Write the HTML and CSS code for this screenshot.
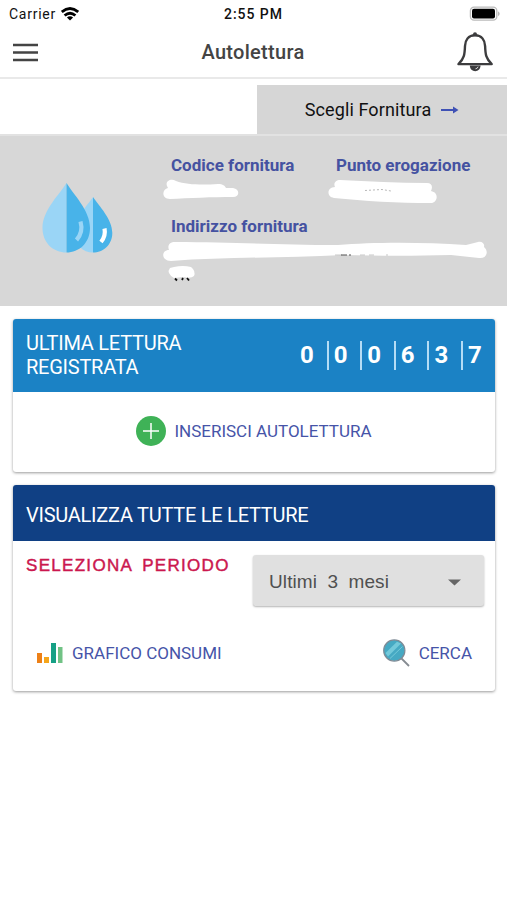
FILE: index.html
```html
<!DOCTYPE html>
<html lang="it">
<head>
    <meta charset="UTF-8">
    <meta name="viewport" content="width=device-width, initial-scale=1.0">
    <title>Autolettura</title>
    <link rel="stylesheet" href="styles.css">
</head>
<body>
    <div class="status-bar">
        <div class="carrier">
            <span>Carrier</span>
            <svg width="18" height="14" viewBox="0 0 18 14" fill="none" stroke="#000" stroke-width="2.8">
                <path d="M.8 4.9Q9-1.800 17.200 4.900"/>
                <path d="M3.600 8.500Q9 3.900 14.400 8.500"/>
                <path d="M9 13.6L5.9 10.6Q9 8.1 12.1 10.6Z" fill="#000" stroke="none"/>
            </svg>
        </div>
        <div class="time">2:55 PM</div>
        <div class="battery">
            <svg width="32" height="16" viewBox="0 0 32 16">
                <rect x="1.4" y="1.2" width="26.4" height="13" rx="3.6" fill="#fff" stroke="#bbb" stroke-width="1.3"/>
                <rect x="3" y="2.8" width="23" height="9.8" rx="2" fill="#000"/>
                <path d="M29.2 5.2Q32 7.7 29.2 10.2Z" fill="#aaa"/>
            </svg>
        </div>
    </div>

    <header class="toolbar">
        <button class="icon-button" aria-label="Menu">
            <svg width="25" height="20" viewBox="0 0 25 20" stroke="#444" stroke-width="2.3">
                <path d="M0 3H25M0 10.500H25M0 18H25"/>
            </svg>
        </button>
        <h1>Autolettura</h1>
        <button class="icon-button" aria-label="Notifiche">
            <svg width="36" height="40" viewBox="0 0 36 40">
                <path d="M12.8 33.5H23.6C23.3 37.2 21 39.2 18.2 39.2S13 37.2 12.8 33.5Z" fill="#3c3c3e"/>
                <path d="M18.5 36.8Q20.6 36.6 21.1 34.7" fill="none" stroke="#fff" stroke-width=".8"/>
                <path d="M18 3.2C11.3 3.2 8.2 8.3 8 14C7.7 22.5 7.2 26.6 1.5 32.1H34.7C28.9 26.6 28.4 22.5 28.1 14C27.9 8.3 24.7 3.2 18 3.2Z" fill="#fff" stroke="#3c3c3e" stroke-width="2.4" stroke-linejoin="round"/>
                <circle cx="18" cy="2.2" r="2" fill="#3c3c3e"/>
            </svg>
        </button>
    </header>

    <div class="supply-bar">
        <button class="supply-button">
            <span>Scegli Fornitura</span>
            <svg width="18" height="8" viewBox="0 0 18 8">
                <path d="M0 4H13" stroke="#3f51b5" stroke-width="2"/>
                <path d="M12 .4L17.5 4L12 7.6Z" fill="#3f51b5"/>
            </svg>
        </button>
    </div>

    <section class="supply-info">
        <svg class="drops" width="72" height="72" viewBox="0 0 72 72">
            <path d="M51 15C45 24 32.500 36 32.500 51C32.500 63 41 70.500 51 70.500Z" fill="#9ad5f6"/>
            <path d="M51 15C57 24 70.300 37 70.300 51C70.300 63 61 70.500 51 70.500Z" fill="#48b3e9"/>
            <path d="M24.500 1C18 12 .5 28 .5 46C.5 61 11.500 70.500 24.500 70.500Z" fill="#9ad5f6"/>
            <path d="M24.500 1C31 12 48 28 48 46C48 61 37 70.500 24.500 70.500Z" fill="#48b3e9"/>
            <path d="M38.500 39.500Q41.500 50 34.500 58" fill="none" stroke="#9ad5f6" stroke-width="4.200"/>
            <path d="M62.500 46.500Q64 54 59 60" fill="none" stroke="#fff" stroke-width="4.200"/>
        </svg>
        <dl class="details">
            <div>
                <dt>Codice fornitura</dt>
                <dd>
                    <svg width="76" height="24" viewBox="0 0 76 24">
                        <path d="M4 7C2 2 8-1 13 2C24 6 40 6 55 5C60 5 62 7 63 9H70C77 10 77 18 70 18C50 18 25 19 7 20C-2 20-1 10 5 9Z" fill="#fff"/>
                    </svg>
                </dd>
            </div>
            <div>
                <dt>Punto erogazione</dt>
                <dd>
                    <svg width="110" height="24" viewBox="0 0 110 24">
                        <path d="M7 8C5 4 8 1 12 1C40 2 70 4 99 4C104 4 105 8 103 12C112 14 109 24 103 24C70 24 36 22 6 19C-2 18-1 8 7 8Z" fill="#fff"/>
                        <path d="M37 11.500L54 10.500L63 12" fill="none" stroke="#999" stroke-width=".7" stroke-dasharray="2 2"/>
                    </svg>
                </dd>
            </div>
            <div class="wide">
                <dt>Indirizzo fornitura</dt>
                <dd>
                    <svg width="324" height="44" viewBox="0 0 324 44">
                        <path d="M6 10C4 5 7 2 12 2C70 2 115 5 175 5C210 2 260 2 303 5L315 2C319 1 322 4 321 7C326 11 324 19 316 18L288 15C250 16 220 16 180 15C120 18 60 17 8 21C-2 21-2 10 6 10Z" fill="#fff"/>
                        <path d="M172 15H179M197 15H202M206 15H211M223 15H225" stroke="#bbb" stroke-width=".8"/>
                        <path d="M178 15H184M186 15H188" stroke="#555" stroke-width="1.200"/>
                        <path d="M11 27Q20 25 28 27Q33 31 31 36Q28 39 20 37L11 38Q3 33 7 28Z" fill="#fff"/>
                        <path d="M12 38.500L14 40.500M19 40L20 38M24 38L26 40.500" stroke="#111" stroke-width="1.800"/>
                    </svg>
                </dd>
            </div>
        </dl>
    </section>

    <main>
        <section class="card">
            <div class="card-header last-reading">
                <h2>ULTIMA LETTURA REGISTRATA</h2>
                <div class="digits">
                    <span>0</span><span>0</span><span>0</span><span>6</span><span>3</span><span>7</span>
                </div>
            </div>
            <button class="link add-reading">
                <svg width="30" height="30" viewBox="0 0 30 30">
                    <circle cx="15" cy="15" r="15" fill="#3fb257"/>
                    <path d="M7 15H23M15 7V23" stroke="#fff" stroke-width="1.500"/>
                </svg>
                <span>INSERISCI AUTOLETTURA</span>
            </button>
        </section>

        <section class="card">
            <div class="card-header all-readings">
                <h2>VISUALIZZA TUTTE LE LETTURE</h2>
            </div>
            <div class="period">
                <span class="period-label">SELEZIONA PERIODO</span>
                <button class="period-select">
                    <span>Ultimi 3 mesi</span>
                    <svg width="13" height="7" viewBox="0 0 13 7"><path d="M0 .5H13L6.500 6.500Z" fill="#666"/></svg>
                </button>
            </div>
            <div class="actions">
                <button class="link">
                    <svg width="26" height="22" viewBox="0 0 26 22">
                        <path d="M0 11H5V21H0Z" fill="#ed8017"/>
                        <path d="M7 15H12V21H7Z" fill="#f5a51b"/>
                        <path d="M14 1H19V21H14Z" fill="#16a085"/>
                        <path d="M21 5H25.500V21H21Z" fill="#71c285"/>
                    </svg>
                    <span>GRAFICO CONSUMI</span>
                </button>
                <button class="link search">
                    <svg width="27" height="28" viewBox="0 0 27 28">
                        <path d="M18.500 19.500L26 27" stroke="#858b91" stroke-width="1.800"/>
                        <circle cx="11.300" cy="11.500" r="10.600" fill="#46a9c3" stroke="#7f8b96" stroke-width="1.200"/>
                        <path d="M2.500 14L14 2.800L18 4.500L5 17.500Z" fill="#74c9da"/>
                        <path d="M7 19.500L19.500 7.500" stroke="#74c9da" stroke-width="1"/>
                    </svg>
                    <span>CERCA</span>
                </button>
            </div>
        </section>
    </main>
</body>
</html>
```

FILE: styles.css
```css
* {
    box-sizing: border-box;
}
body {
    margin: 0;
    min-height: 900px;
    background-color: #fff;
    font-family: Roboto, sans-serif;
    color: #111;
}
h1, h2, dl, dd {
    margin: 0;
    font-weight: normal;
}
button {
    padding: 0;
    border: none;
    background: none;
    font-family: inherit;
    cursor: pointer;
}
svg {
    display: block;
    flex: none;
}
.status-bar {
    display: grid;
    grid-template-columns: 1fr auto 1fr;
    align-items: center;
    height: 27px;
    padding: 0 6px 0 9px;
    font-size: 14px;
}
.carrier {
    display: flex;
    align-items: center;
    gap: 5px;
    letter-spacing: 0.75px;
}
.time {
    margin-right: 3px;
    font-weight: 500;
    letter-spacing: 0.95px;
}
.battery {
    display: flex;
    justify-content: flex-end;
}
.toolbar {
    display: flex;
    align-items: center;
    justify-content: space-between;
    height: 52px;
    padding: 0 14px 0 13px;
    border-bottom: 2px solid #e9e9e9;
}
.toolbar h1 {
    padding-left: 11px;
    font-size: 20px;
    font-weight: 500;
    letter-spacing: 0.3px;
    color: #444;
}
.supply-bar {
    display: flex;
    justify-content: flex-end;
    padding-top: 6px;
}
.supply-button {
    display: flex;
    align-items: center;
    justify-content: center;
    gap: 10px;
    width: 250px;
    height: 49px;
    background-color: #d6d6d6;
    font-size: 18px;
    letter-spacing: 0.12px;
    color: #111;
}
.supply-info {
    display: flex;
    height: 172px;
    padding: 20px 0 0 42px;
    border-top: 2px solid #e2e2e2;
    background-color: #d7d7d7;
}
.drops {
    margin-top: 26px;
}
.details {
    display: grid;
    grid-template-columns: 165px 1fr;
    grid-template-rows: 61px auto;
    flex: 1;
    padding-left: 57px;
}
.details .wide {
    grid-column: span 2;
}
dt {
    margin-bottom: 4px;
    font-size: 17px;
    font-weight: bold;
    line-height: 19px;
    color: #4552a1;
}
dd {
    margin-left: -8px;
}
main {
    display: flex;
    flex-direction: column;
    gap: 13px;
    padding: 13px 12px 0 13px;
}
.card {
    border-radius: 3px;
    background-color: #fff;
    box-shadow: 0 1px 3px rgba(0, 0, 0, 0.4);
}
.card-header {
    display: flex;
    justify-content: space-between;
    padding: 0 12px 0 13px;
    border-radius: 3px 3px 0 0;
    color: #fff;
}
.card-header h2 {
    font-size: 20px;
    line-height: 24px;
    letter-spacing: -0.25px;
}
.last-reading {
    height: 73px;
    padding-top: 12px;
    background-color: #1b82c5;
}
.last-reading h2 {
    width: 200px;
}
.digits {
    display: flex;
    margin-top: 10px;
    font-size: 24px;
    font-weight: bold;
    line-height: 29px;
}
.digits span {
    width: 33.600px;
    height: 29px;
    padding-left: 5px;
    border-left: 2px solid #b5dcf5;
}
.digits span:first-child {
    border-left-color: transparent;
}
.digits span:last-child {
    width: 22px;
}
.link {
    display: flex;
    align-items: center;
    gap: 9px;
    font-size: 17px;
    color: #4654a8;
}
.add-reading {
    justify-content: center;
    gap: 8px;
    width: 100%;
    height: 80px;
    padding-bottom: 3px;
}
.all-readings {
    align-items: center;
    height: 56px;
    padding-top: 3px;
    background-color: #104084;
}
.period {
    display: flex;
    justify-content: space-between;
    padding: 14px 11px 0 13px;
}
.period-label {
    font-family: "Liberation Sans", sans-serif;
    font-size: 17px;
    line-height: 21px;
    letter-spacing: 1.300px;
    word-spacing: 4px;
    color: #cb174e;
    -webkit-text-stroke: 0.45px #cb174e;
}
.period-select {
    display: flex;
    align-items: center;
    justify-content: space-between;
    width: 231px;
    height: 51px;
    padding: 3px 23px 0 16px;
    border-radius: 3px;
    background-color: #e0e0e0;
    box-shadow: 0 1px 2px rgba(0, 0, 0, 0.3);
    font-family: "Liberation Sans", sans-serif;
    font-size: 19px;
    letter-spacing: 0.1px;
    word-spacing: 5px;
    color: #505050;
}
.actions {
    display: flex;
    align-items: center;
    justify-content: space-between;
    height: 85px;
    padding: 8px 23px 0 24px;
}
```
